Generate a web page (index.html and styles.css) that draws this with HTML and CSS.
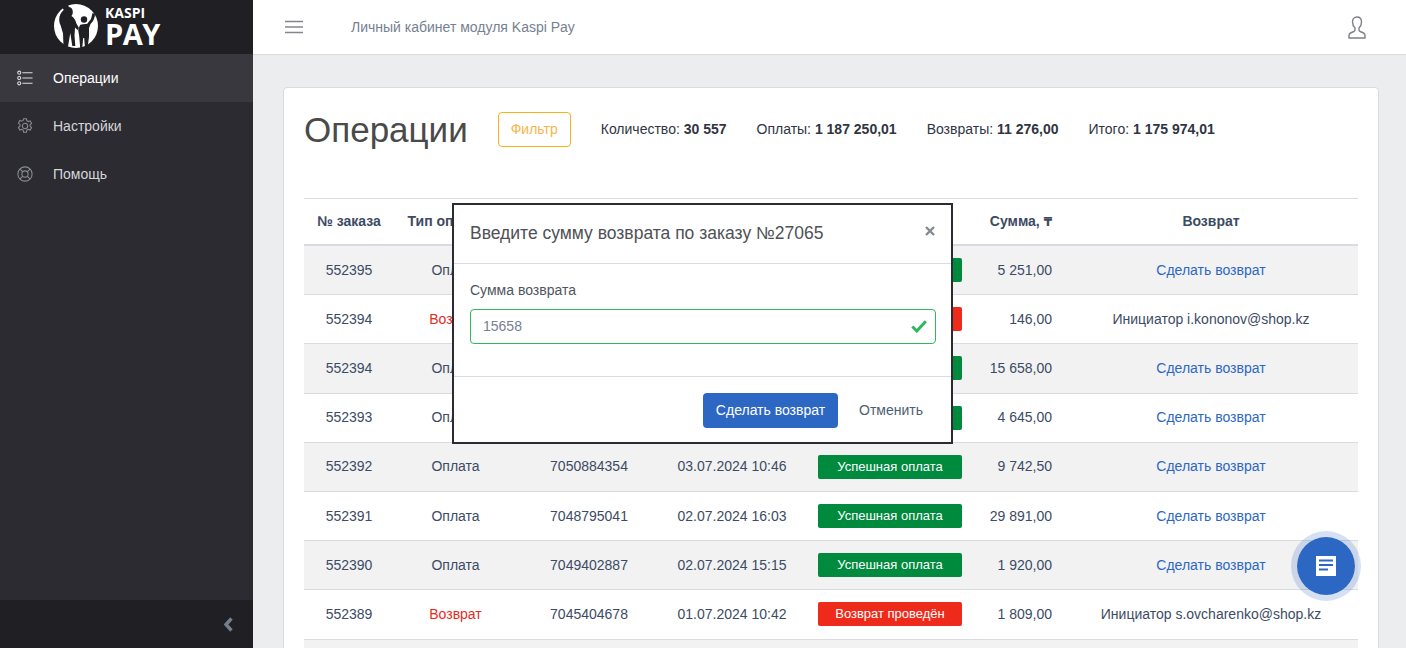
FILE: index.html
```html
<!DOCTYPE html>
<html lang="ru">
<head>
  <meta charset="UTF-8" />
  <meta name="viewport" content="width=device-width, initial-scale=1.0"/>
  <title>Kaspi Pay</title>
  <link rel="stylesheet" href="styles.css">
</head>
<body>
  <aside class="sidebar">
    <div class="brand">
      <svg class="brand-mark" viewBox="0 0 44 44" width="44" height="44">
        <circle cx="22" cy="22" r="22" fill="#fff"/>
        <g fill="#1f1f24">
          <path d="M15 3c2.400 0 3.800 2.300 3.800 5 0 1.600-.5 3-1.400 4 2.600 1.400 4 4 5 7.500l2.600 4.500-1.500 2-2.500-2.500-.5 8 .8 10.500h-3l-2-13-2.300 13.500h-4.500l-.5-13-2.500-8.500c-.8-1.500-1.300-3.500-1.300-5.500 0-4 2-7.500 4.500-9.500-.7-1-1-2-1-3 0-2.700 1.300-5 3.300-5z"/>
          <circle cx="30" cy="15.500" r="3.200"/>
          <path d="M26 21c1.500-1 5-1 7-1l4-5 1.500-6 2.500 1c0 3.500-1.500 7-4.500 10l-1.500 4v9l-1.500 11h-2.500l-.8-10h-1l-1 10h-2l-1-12-1-6z"/>
        </g>
      </svg>
      <div class="brand-text">
        <span class="brand-top">KASPI</span>
        <span class="brand-pay">PAY</span>
      </div>
    </div>
    <nav class="nav">
      <a class="nav-item active">
        <svg class="nav-icon" viewBox="0 0 18 18"><g fill="none" stroke="currentColor" stroke-width="1.2"><circle cx="2.500" cy="3" r="1.700"/><circle cx="2.500" cy="9" r="1.700"/><circle cx="2.500" cy="15" r="1.700"/><path d="M6 3h11.500M6 9h11.500M6 15h11.500"/></g></svg>
        Операции
      </a>
      <a class="nav-item">
        <svg class="nav-icon" viewBox="0 0 18 18"><g fill="none" stroke="currentColor" stroke-width="1.200"><circle cx="9" cy="9" r="3"/><path d="M7.400 .8h3.200l.5 2.400 1.500.8 2.200-.8 1.600 2.900-1.700 1.500v1.600l1.700 1.500-1.600 2.900-2.200-.8-1.500.8-.5 2.400H7.400l-.5-2.400-1.500-.8-2.200.8-1.600-2.900 1.700-1.500V7.200L1.600 5.700l1.600-2.900 2.200.8 1.500-.8z"/></g></svg>
        Настройки
      </a>
      <a class="nav-item">
        <svg class="nav-icon" viewBox="0 0 18 18"><g fill="none" stroke="currentColor" stroke-width="1.200"><circle cx="9" cy="9" r="8"/><circle cx="9" cy="9" r="3.500"/><path d="M3.400 3.400l3.100 3.100M14.600 3.400l-3.100 3.100M3.400 14.600l3.100-3.100M14.600 14.600l-3.100-3.100"/></g></svg>
        Помощь
      </a>
    </nav>
    <div class="sidebar-footer">
      <svg class="collapse-icon" viewBox="0 0 12 16" width="12" height="16"><path d="M9.500 2.500L4 8.500l5.500 6" fill="none" stroke="currentColor" stroke-width="3.400"/></svg>
    </div>
  </aside>

  <div class="wrapper">
    <header class="topbar">
      <svg class="burger" viewBox="0 0 18 14" width="18" height="14"><path d="M0 1.500h18M0 7h18M0 12.500h18" stroke="currentColor" stroke-width="1.600"/></svg>
      <span class="topbar-title">Личный кабинет модуля Kaspi Pay</span>
      <svg class="user-icon" viewBox="0 0 18 23" width="18" height="23"><path d="M9 1C6 1 4.500 3 4.500 6c0 2.500 1 4.500 2.500 6v2c0 .8-.4 1.200-1.200 1.500L2.500 17c-1 .5-1.500 1.200-1.500 2.300V22h16v-2.700c0-1.100-.5-1.800-1.500-2.300l-3.300-1.500c-.8-.3-1.200-.7-1.200-1.500v-2c1.500-1.500 2.500-3.500 2.500-6 0-3-1.500-5-4.500-5z" fill="none" stroke="currentColor" stroke-width="1.400"/></svg>
    </header>

    <main class="content">
      <section class="card">
        <div class="card-head">
          <h1 class="page-title">Операции</h1>
          <button class="btn-filter">Фильтр</button>
          <div class="stats">
            <span>Количество: <b>30 557</b></span>
            <span>Оплаты: <b>1 187 250,01</b></span>
            <span>Возвраты: <b>11 276,00</b></span>
            <span>Итого: <b>1 175 974,01</b></span>
          </div>
        </div>
        <table class="orders">
          <colgroup>
            <col class="c-id"><col class="c-type"><col class="c-acc"><col class="c-date"><col class="c-status"><col class="c-sum"><col class="c-ret">
          </colgroup>
          <thead>
            <tr>
              <th>№ заказа</th>
              <th>Тип операции</th>
              <th>Номер</th>
              <th>Дата</th>
              <th>Статус</th>
              <th class="num">Сумма, <span class="tenge">₸</span></th>
              <th>Возврат</th>
            </tr>
          </thead>
          <tbody>
            <tr><td>552395</td><td>Оплата</td><td>7051236840</td><td>04.07.2024 12:10</td><td><span class="badge ok">Успешная оплата</span></td><td class="num">5 251,00</td><td><a class="link">Сделать возврат</a></td></tr>
            <tr><td>552394</td><td class="red">Возврат</td><td>7050991273</td><td>04.07.2024 11:32</td><td><span class="badge bad">Возврат проведён</span></td><td class="num">146,00</td><td>Инициатор i.kononov@shop.kz</td></tr>
            <tr><td>552394</td><td>Оплата</td><td>7050991273</td><td>04.07.2024 09:18</td><td><span class="badge ok">Успешная оплата</span></td><td class="num">15 658,00</td><td><a class="link">Сделать возврат</a></td></tr>
            <tr><td>552393</td><td>Оплата</td><td>7050912046</td><td>03.07.2024 17:54</td><td><span class="badge ok">Успешная оплата</span></td><td class="num">4 645,00</td><td><a class="link">Сделать возврат</a></td></tr>
            <tr><td>552392</td><td>Оплата</td><td>7050884354</td><td>03.07.2024 10:46</td><td><span class="badge ok">Успешная оплата</span></td><td class="num">9 742,50</td><td><a class="link">Сделать возврат</a></td></tr>
            <tr><td>552391</td><td>Оплата</td><td>7048795041</td><td>02.07.2024 16:03</td><td><span class="badge ok">Успешная оплата</span></td><td class="num">29 891,00</td><td><a class="link">Сделать возврат</a></td></tr>
            <tr><td>552390</td><td>Оплата</td><td>7049402887</td><td>02.07.2024 15:15</td><td><span class="badge ok">Успешная оплата</span></td><td class="num">1 920,00</td><td><a class="link">Сделать возврат</a></td></tr>
            <tr><td>552389</td><td class="red">Возврат</td><td>7045404678</td><td>01.07.2024 10:42</td><td><span class="badge bad">Возврат проведён</span></td><td class="num">1 809,00</td><td>Инициатор s.ovcharenko@shop.kz</td></tr>
            <tr><td>&nbsp;</td><td></td><td></td><td></td><td></td><td></td><td></td></tr>
          </tbody>
        </table>
      </section>
    </main>
  </div>

  <div class="modal">
    <div class="modal-head">
      <h2 class="modal-title">Введите сумму возврата по заказу №27065</h2>
      <svg class="modal-close" viewBox="0 0 10 10" width="10" height="10"><path d="M1 1l8 8M9 1l-8 8" stroke="currentColor" stroke-width="2.400"/></svg>
    </div>
    <div class="modal-body">
      <label class="field-label" for="refund">Сумма возврата</label>
      <div class="field">
        <input id="refund" class="field-input" value="15658">
        <svg class="field-check" viewBox="0 0 16 13" width="16" height="13"><path d="M1.300 6.500l4.500 4.500 9-9.800" fill="none" stroke="currentColor" stroke-width="3"/></svg>
      </div>
    </div>
    <div class="modal-foot">
      <button class="btn-primary">Сделать возврат</button>
      <button class="btn-plain">Отменить</button>
    </div>
  </div>

  <button class="chat">
    <svg viewBox="0 0 20 20" width="20" height="20"><path fill="#fff" fill-rule="evenodd" d="M0 0h20v20H0zM3 3.500v2h14v-2zM3 8v2h14V8zM3 12.500v2h9v-2z"/></svg>
  </button>
</body>
</html>
```

FILE: styles.css
```css
* {
  box-sizing: border-box;
}

html, body {
  height: 100%;
}

body {
  margin: 0;
  display: flex;
  overflow: hidden;
  font-family: "Liberation Sans", "DejaVu Sans", sans-serif;
  font-size: 14px;
  line-height: 21px;
  color: #3c4b64;
  background: #ebedef;
}

/* sidebar */
.sidebar {
  width: 253px;
  flex-shrink: 0;
  display: flex;
  flex-direction: column;
  background: #2b2b31;
}

.brand {
  height: 54px;
  display: flex;
  align-items: flex-start;
  gap: 7px;
  padding: 4px 0 0 54px;
  background: #1f1f24;
  color: #fff;
}

.brand-text {
  display: flex;
  flex-direction: column;
  font-family: "Open Sans", "Liberation Sans", sans-serif;
  font-weight: 700;
}

.brand-top {
  font-size: 14px;
  line-height: 15px;
  margin-top: 1px;
}

.brand-pay {
  font-size: 29px;
  line-height: 27px;
  letter-spacing: -.5px;
}

.nav {
  flex: 1;
}

.nav-item {
  height: 48px;
  display: flex;
  align-items: center;
  padding-left: 17px;
  color: #d5d6d9;
}

.nav-item.active {
  background: #38383e;
  color: #fff;
}

.nav-icon {
  width: 16px;
  height: 16px;
  margin-right: 20px;
  color: #8a8c92;
}

.active .nav-icon {
  color: #dcdde0;
}

.sidebar-footer {
  height: 48px;
  display: flex;
  align-items: center;
  justify-content: flex-end;
  padding-right: 19px;
  background: #1f1f24;
}

.collapse-icon {
  color: #737f8e;
}

/* top bar */
.wrapper {
  flex: 1;
  min-width: 0;
  display: flex;
  flex-direction: column;
}

.topbar {
  height: 55px;
  flex-shrink: 0;
  display: flex;
  align-items: center;
  padding: 0 40px 0 32px;
  background: #fff;
  border-bottom: 1px solid #d8dbe0;
}

.burger {
  color: #85858d;
}

.topbar-title {
  margin-left: 48px;
  color: #768192;
}

.user-icon {
  margin-left: auto;
  color: #7f8088;
}

/* card */
.content {
  flex: 1;
  padding: 32px 27px 0 30px;
}

.card {
  padding: 0 20px 20px;
  background: #fff;
  border: 1px solid #d8dbe0;
  border-radius: 4px;
}

.card-head {
  height: 110px;
  display: flex;
  align-items: flex-start;
  padding-top: 24px;
}

.page-title {
  margin: 0 30px 0 0;
  font-size: 35px;
  line-height: 36px;
  font-weight: 400;
  color: #4a4a4a;
}

.btn-filter {
  height: 35px;
  width: 73px;
  padding: 0;
  font: inherit;
  color: #f9b54a;
  background: #fff;
  border: 1px solid #f9b115;
  border-radius: 4px;
}

.stats {
  display: flex;
  gap: 30px;
  margin-left: 30px;
  padding-top: 7px;
  color: #2f3542;
}

/* table */
.orders {
  width: 100%;
  table-layout: fixed;
  border-collapse: separate;
  border-spacing: 0;
  text-align: center;
}

.c-id { width: 90px; }
.c-type { width: 123px; }
.c-acc { width: 144px; }
.c-date { width: 142px; }
.c-status { width: 174px; }
.c-sum { width: 87px; }

.orders th {
  height: 48px;
  padding: 0 12px;
  font-weight: 700;
  white-space: nowrap;
  border-top: 1px solid #d8dbe0;
  border-bottom: 2px solid #d8dbe0;
}

.orders td {
  height: 49.2px;
  padding: 0 12px;
  border-bottom: 1px solid #d8dbe0;
  white-space: nowrap;
}

.orders tbody tr:nth-child(odd) {
  background: #f2f2f2;
}

.orders .num {
  text-align: right;
}

.tenge {
  font-size: 12px;
}

.red {
  color: #e8291c;
}

.link {
  color: #2d67c4;
}

.badge {
  display: block;
  height: 24px;
  margin: 0 3px;
  font-size: 13px;
  font-weight: 400;
  line-height: 24px;
  color: #fff;
  border-radius: 2px;
}

.badge.ok {
  background: #008a3e;
}

.badge.bad {
  background: #ee2a1b;
}

/* modal */
.modal {
  position: absolute;
  left: 452px;
  top: 203px;
  width: 501px;
  height: 241px;
  background: #fff;
  border: 2px solid #2b2b31;
}

.modal-head {
  height: 59px;
  display: flex;
  align-items: center;
  justify-content: space-between;
  padding: 0 16px 2px 16px;
  border-bottom: 1px solid #d8dbe0;
}

.modal-title {
  margin: 0;
  font-size: 17.5px;
  font-weight: 400;
  color: #4f5156;
}

.modal-close {
  color: #858990;
  margin-top: -4px;
}

.modal-body {
  height: 113px;
  padding: 16px 15px 0 16px;
  border-bottom: 1px solid #d8dbe0;
}

.field-label {
  display: block;
  margin-bottom: 8px;
  color: #4f5560;
}

.field {
  position: relative;
}

.field-input {
  display: block;
  width: 100%;
  height: 35px;
  padding: 0 40px 2px 12px;
  font: inherit;
  color: #768192;
  border: 1px solid #2eb85c;
  border-radius: 4px;
  outline: none;
}

.field-check {
  position: absolute;
  right: 9px;
  top: 11px;
  color: #2eb85c;
}

.modal-foot {
  display: flex;
  align-items: flex-start;
  justify-content: flex-end;
  gap: 21px;
  padding: 16px 28px 0 0;
}

.btn-primary {
  width: 135px;
  height: 35px;
  padding: 0;
  font: inherit;
  color: #fff;
  background: #2d67c4;
  border: 0;
  border-radius: 4px;
}

.btn-plain {
  height: 35px;
  padding: 0;
  font: inherit;
  color: #4f5d73;
  background: none;
  border: 0;
}

/* chat button */
.chat {
  position: absolute;
  left: 1291px;
  top: 531px;
  width: 70px;
  height: 70px;
  display: flex;
  align-items: center;
  justify-content: center;
  padding: 0;
  background: #2d67c4;
  background-clip: padding-box;
  border: 6px solid rgba(45, 103, 196, .2);
  border-radius: 50%;
}
```
